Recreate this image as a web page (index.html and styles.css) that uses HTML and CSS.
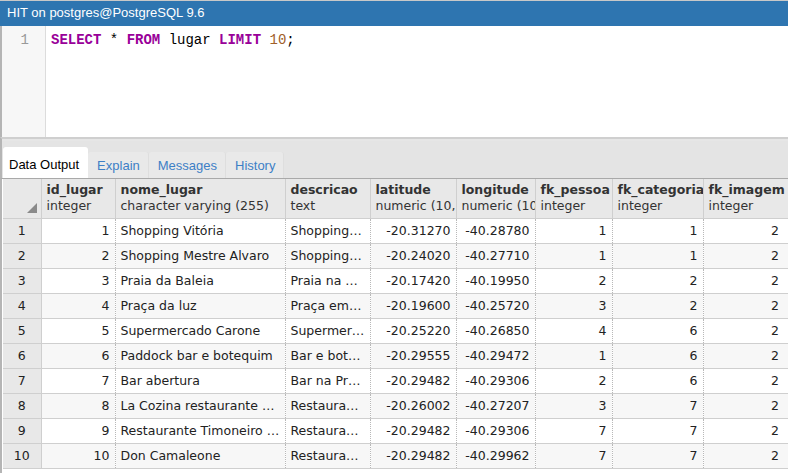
FILE: index.html
```html
<!DOCTYPE html>
<html>
<head>
<meta charset="utf-8">
<link rel="stylesheet" href="styles.css">
</head>
<body>
<div class="app">
  <div class="titlebar">HIT on postgres@PostgreSQL 9.6</div>
  <div class="editor">
    <div class="gutter"><span class="lineno">1</span></div>
    <div class="code"><span class="kw">SELECT</span> * <span class="kw">FROM</span> lugar <span class="kw">LIMIT</span> <span class="num">10</span>;</div>
  </div>
  <div class="splitter"></div>
  <div class="tabs">
    <div class="tab active">Data Output</div>
    <div class="tab">Explain</div>
    <div class="tab">Messages</div>
    <div class="tab">History</div>
  </div>
  <div class="gridwrap">
    <table class="grid">
      <colgroup>
        <col class="c-rn"><col class="c-id"><col class="c-nome"><col class="c-desc"><col class="c-lat"><col class="c-lon"><col class="c-pes"><col class="c-cat"><col class="c-img">
      </colgroup>
      <thead>
        <tr>
          <th class="corner"><span class="tri"></span></th>
          <th><b>id_lugar</b><span>integer</span></th>
          <th><b>nome_lugar</b><span>character varying (255)</span></th>
          <th><b>descricao</b><span>text</span></th>
          <th><b>latitude</b><span>numeric (10,5)</span></th>
          <th><b>longitude</b><span>numeric (10,5)</span></th>
          <th><b>fk_pessoa</b><span>integer</span></th>
          <th><b>fk_categoria</b><span>integer</span></th>
          <th><b>fk_imagem</b><span>integer</span></th>
        </tr>
      </thead>
      <tbody>
        <tr><td class="rn">1</td><td class="r">1</td><td>Shopping Vitória</td><td>Shopping Vitória em Vitória</td><td class="r">-20.31270</td><td class="r">-40.28780</td><td class="r">1</td><td class="r">1</td><td class="r">2</td></tr>
        <tr><td class="rn">2</td><td class="r">2</td><td>Shopping Mestre Alvaro</td><td>Shopping Mestre Alvaro na Serra</td><td class="r">-20.24020</td><td class="r">-40.27710</td><td class="r">1</td><td class="r">1</td><td class="r">2</td></tr>
        <tr><td class="rn">3</td><td class="r">3</td><td>Praia da Baleia</td><td>Praia na Serra</td><td class="r">-20.17420</td><td class="r">-40.19950</td><td class="r">2</td><td class="r">2</td><td class="r">2</td></tr>
        <tr><td class="rn">4</td><td class="r">4</td><td>Praça da luz</td><td>Praça em Serra</td><td class="r">-20.19600</td><td class="r">-40.25720</td><td class="r">3</td><td class="r">2</td><td class="r">2</td></tr>
        <tr><td class="rn">5</td><td class="r">5</td><td>Supermercado Carone</td><td>Supermercado em Vitória</td><td class="r">-20.25220</td><td class="r">-40.26850</td><td class="r">4</td><td class="r">6</td><td class="r">2</td></tr>
        <tr><td class="rn">6</td><td class="r">6</td><td>Paddock bar e botequim</td><td>Bar e botequim</td><td class="r">-20.29555</td><td class="r">-40.29472</td><td class="r">1</td><td class="r">6</td><td class="r">2</td></tr>
        <tr><td class="rn">7</td><td class="r">7</td><td>Bar abertura</td><td>Bar na Praia do Canto</td><td class="r">-20.29482</td><td class="r">-40.29306</td><td class="r">2</td><td class="r">6</td><td class="r">2</td></tr>
        <tr><td class="rn">8</td><td class="r">8</td><td>La Cozina restaurante e bar</td><td>Restaurante em Vitória</td><td class="r">-20.26002</td><td class="r">-40.27207</td><td class="r">3</td><td class="r">7</td><td class="r">2</td></tr>
        <tr><td class="rn">9</td><td class="r">9</td><td>Restaurante Timoneiro da Praia</td><td>Restaurante em Vitória</td><td class="r">-20.29482</td><td class="r">-40.29306</td><td class="r">7</td><td class="r">7</td><td class="r">2</td></tr>
        <tr><td class="rn">10</td><td class="r">10</td><td>Don Camaleone</td><td>Restaurante em Vitória</td><td class="r">-20.29482</td><td class="r">-40.29962</td><td class="r">7</td><td class="r">7</td><td class="r">2</td></tr>
      </tbody>
    </table>
  </div>
</div>
</body>
</html>
```
FILE: styles.css
```css
* { box-sizing: border-box; }
html, body { margin: 0; padding: 0; background: #fff; }
body { width: 788px; height: 473px; overflow: hidden; }
.app { width: 788px; height: 473px; overflow: hidden; display: flex; flex-direction: column; }

.titlebar {
  height: 26px;
  background: #2e75b0;
  border-top: 1px solid #c8c8c8;
  color: #fff;
  font: 13px "Liberation Sans", Arial, sans-serif;
  line-height: 24px;
  padding-left: 7px;
  flex: none;
}

.editor {
  height: 111px;
  display: flex;
  border-left: 2px solid #b5b5b5;
  flex: none;
}
.gutter {
  width: 44px;
  background: #f7f7f7;
  border-right: 1px solid #dcdcdc;
  text-align: right;
  padding-right: 16px;
  padding-top: 6px;
  font: 14px "Liberation Mono", "Courier New", monospace;
  color: #999;
  line-height: 17px;
}
.code {
  padding-left: 5px;
  padding-top: 6px;
  font: 14px "Liberation Mono", "Courier New", monospace;
  line-height: 17px;
  color: #000;
  white-space: pre;
}
.kw { color: #990099; font-weight: bold; }
.num { color: #a0602a; }

.splitter {
  height: 4px;
  background: #e6e6e6;
  border-top: 2px solid #cfcfcf;
  border-left: 2px solid #b5b5b5;
  flex: none;
}

.tabs {
  height: 37px;
  background: #e4e4e4;
  display: flex;
  align-items: flex-start;
  padding-top: 6px;
  padding-left: 1px;
  border-left: 2px solid #b5b5b5;
  flex: none;
}
.tab {
  margin-top: 5px;
  height: 26px;
  padding: 0 8px 0 9px;
  font: 13px "Liberation Sans", Arial, sans-serif;
  line-height: 27px;
  color: #3d7fc6;
  background: #e9e9e9;
  border-right: 1px solid #dedede;
  border-radius: 3px 3px 0 0;
}
.tab.active {
  margin-top: 0;
  height: 31px;
  line-height: 36px;
  background: #fff;
  color: #000;
  padding: 0 9px 0 6px;
  border-right: none;
}

.gridwrap {
  flex: 1;
  overflow: hidden;
  border-left: 2px solid #b5b5b5;
  border-top: 1px solid #a9a9a9;
  padding-left: 1px;
}
.grid {
  border-collapse: collapse;
  table-layout: fixed;
  width: 785px;
  font: 12.5px "DejaVu Sans", Verdana, sans-serif;
  color: #222;
}
.c-rn { width: 38px; }
.c-id { width: 74px; }
.c-nome { width: 170px; }
.c-desc { width: 85px; }
.c-lat { width: 86px; }
.c-lon { width: 79px; }
.c-pes { width: 77px; }
.c-cat { width: 91px; }
.c-img { width: 85px; }

.grid th {
  height: 39px;
  background: #e8e8e8;
  text-align: left;
  vertical-align: top;
  font-weight: normal;
  padding: 3px 0 0 5px;
  border-right: 1px solid #cfcfcf;
  border-bottom: 1px solid #cfcfcf;
  overflow: hidden;
  white-space: nowrap;
  line-height: 16px;
}
.grid th:last-child { border-right: none; }
.grid th b { display: block; font-weight: bold; color: #333; }
.grid th span { display: block; color: #333; }
.grid th.corner { position: relative; }
.tri {
  position: absolute;
  right: 4px;
  bottom: 5px;
  width: 0; height: 0;
  border-left: 10px solid transparent;
  border-bottom: 10px solid #8a8a8a;
}

.grid td {
  height: 25px;
  padding: 0 5px;
  border-bottom: 1px solid #cfcfcf;
  border-right: 1px dotted #b8b8b8;
  white-space: nowrap;
  overflow: hidden;
  text-overflow: ellipsis;
  line-height: 24px;
}
.grid td:last-child { border-right: none; padding-right: 9px; }
.grid td.r { text-align: right; }
.grid td.rn {
  background: #e8e8e8;
  text-align: center;
  border-right: 1px solid #cfcfcf;
  color: #222;
}
.grid tbody tr:nth-child(even) td { background: #f7f7f7; }
.grid tbody tr:nth-child(even) td.rn { background: #e8e8e8; }
```
